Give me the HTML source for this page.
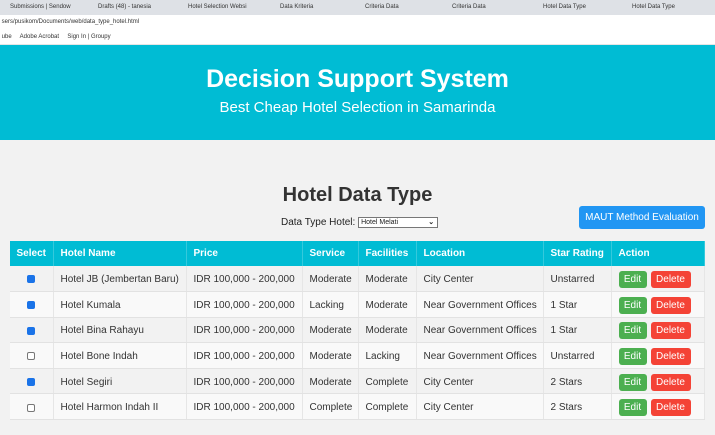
<!DOCTYPE html>
<html><head><style>
*{box-sizing:border-box;margin:0;padding:0}
body{width:715px;height:435px;overflow:hidden;background:#f2f2f2;font-family:"Liberation Sans",Arial,sans-serif;position:relative}
.tabs{position:absolute;top:0;left:0;width:715px;height:15px;background:#dee1e6;font-size:6px;color:#333}
.tabs span{position:absolute;top:4px}
.addr{position:absolute;top:15px;left:0;width:715px;height:15px;background:#fff;font-size:6px;color:#333;padding:4px 0 0 0}
.bm{position:absolute;top:30px;left:0;width:715px;height:15px;background:#fff;font-size:6px;color:#333;padding:4px 0 0 0;border-bottom:1px solid #e5e5e5}
.hdr{position:absolute;top:45px;left:0;width:715px;height:95px;background:#00bcd4;color:#fff;text-align:center}
.hdr h1{font-size:25px;font-weight:bold;margin-top:20px}
.hdr p{font-size:15px;margin-top:5px}
h2{position:absolute;top:184px;left:0;width:715px;text-align:center;font-size:20px;color:#333}
.sel{position:absolute;top:217px;left:281px;font-size:10px;color:#222}
.sel span{display:inline-block;width:80px;height:11px;border:1px solid #777;background:#fff;font-size:7px;vertical-align:middle;padding-left:2px;line-height:9px;position:relative}
.btn{position:absolute;left:579px;top:206px;width:126px;height:23px;background:#2196f3;color:#fff;font-size:10px;border-radius:3px;text-align:center;padding-top:6px;line-height:12px}
table{position:absolute;top:241px;left:10px;width:695px;border-collapse:collapse;font-size:10px;color:#333}
th{background:#00bcd4;color:#fff;text-align:left;height:25px;padding-left:7px;border-right:1px solid #35c9dc;font-weight:bold}
td{height:25.6px;padding-left:7px;padding-top:2px;border-bottom:1px solid #e2e2e2;border-right:1px solid #e6e6e6;vertical-align:middle}
td:first-child,th:first-child{text-align:center;padding-left:0}
tr:nth-child(odd) td{background:#f9f9f9}
.cb{display:inline-block;width:8px;height:8px;border-radius:2px;background:#1a73e8;vertical-align:middle}
.cb.o{background:#fff;border:1px solid #777}
.e,.d{display:inline-block;color:#fff;font-size:10px;height:17px;padding-top:3px;line-height:12px;border-radius:3px;text-align:center;vertical-align:middle}
.e{background:#4caf50;width:28px}
.d{background:#f44336;width:40px;margin-left:4px}
</style></head><body>
<div class="tabs"><span style="left:10px">Submissions | Sendow</span><span style="left:98px">Drafts (48) - tanesia</span><span style="left:188px">Hotel Selection Websi</span><span style="left:280px">Data Kriteria</span><span style="left:365px">Criteria Data</span><span style="left:452px">Criteria Data</span><span style="left:543px">Hotel Data Type</span><span style="left:632px">Hotel Data Type</span></div>
<div class="addr">&nbsp;sers/pusikom/Documents/web/data_type_hotel.html</div>
<div class="bm">&nbsp;ube &nbsp; &nbsp; Adobe Acrobat &nbsp; &nbsp; Sign In | Groupy</div>
<div class="hdr"><h1>Decision Support System</h1><p>Best Cheap Hotel Selection in Samarinda</p></div>
<h2>Hotel Data Type</h2>
<div class="sel">Data Type Hotel: <span>Hotel Melati<b style="position:absolute;right:3px;top:0;font-size:7px">⌄</b></span></div>
<div class="btn">MAUT Method Evaluation</div>
<table>
<colgroup><col style="width:43px"><col style="width:133px"><col style="width:116px"><col style="width:56px"><col style="width:58px"><col style="width:127px"><col style="width:68px"><col></colgroup>
<tr><th>Select</th><th>Hotel Name</th><th>Price</th><th>Service</th><th>Facilities</th><th>Location</th><th>Star Rating</th><th>Action</th></tr>
<tr><td><i class="cb"></i></td><td>Hotel JB (Jembertan Baru)</td><td>IDR 100,000 - 200,000</td><td>Moderate</td><td>Moderate</td><td>City Center</td><td>Unstarred</td><td><span class="e">Edit</span><span class="d">Delete</span></td></tr>
<tr><td><i class="cb"></i></td><td>Hotel Kumala</td><td>IDR 100,000 - 200,000</td><td>Lacking</td><td>Moderate</td><td>Near Government Offices</td><td>1 Star</td><td><span class="e">Edit</span><span class="d">Delete</span></td></tr>
<tr><td><i class="cb"></i></td><td>Hotel Bina Rahayu</td><td>IDR 100,000 - 200,000</td><td>Moderate</td><td>Moderate</td><td>Near Government Offices</td><td>1 Star</td><td><span class="e">Edit</span><span class="d">Delete</span></td></tr>
<tr><td><i class="cb o"></i></td><td>Hotel Bone Indah</td><td>IDR 100,000 - 200,000</td><td>Moderate</td><td>Lacking</td><td>Near Government Offices</td><td>Unstarred</td><td><span class="e">Edit</span><span class="d">Delete</span></td></tr>
<tr><td><i class="cb"></i></td><td>Hotel Segiri</td><td>IDR 100,000 - 200,000</td><td>Moderate</td><td>Complete</td><td>City Center</td><td>2 Stars</td><td><span class="e">Edit</span><span class="d">Delete</span></td></tr>
<tr><td><i class="cb o"></i></td><td>Hotel Harmon Indah II</td><td>IDR 100,000 - 200,000</td><td>Complete</td><td>Complete</td><td>City Center</td><td>2 Stars</td><td><span class="e">Edit</span><span class="d">Delete</span></td></tr>
</table>
</body></html>
